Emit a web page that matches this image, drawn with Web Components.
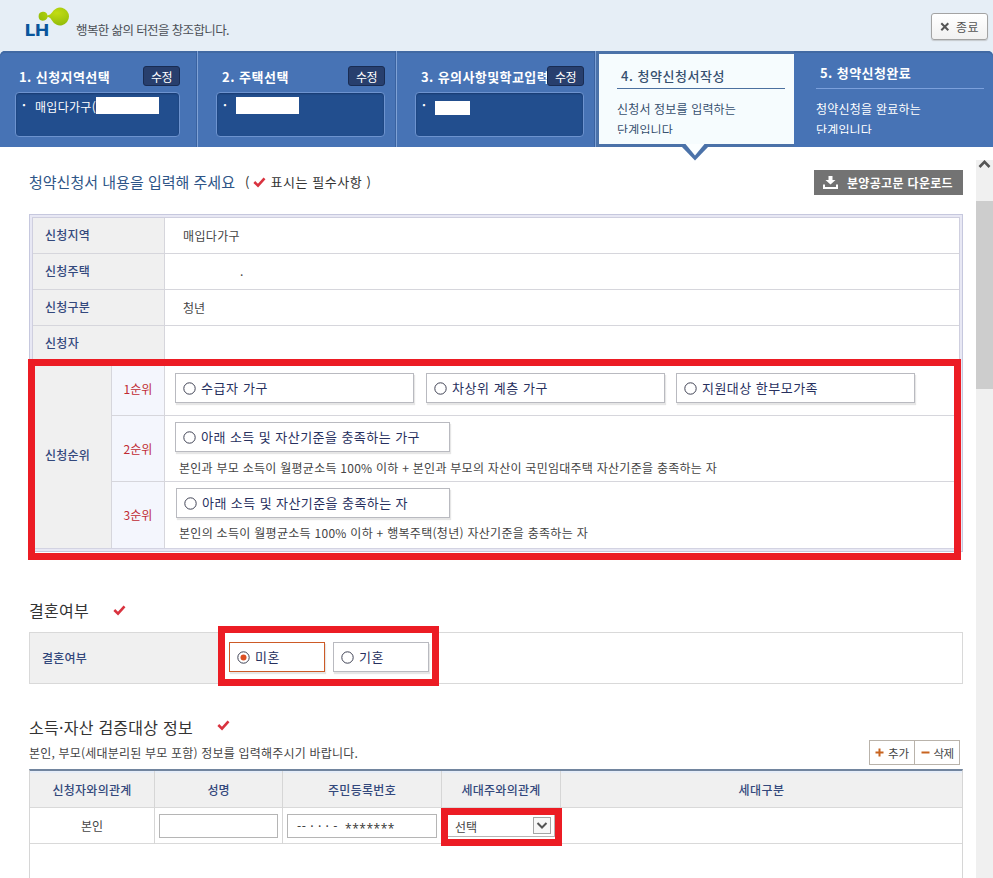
<!DOCTYPE html>
<html lang="ko">
<head>
<meta charset="utf-8">
<title>청약신청서작성</title>
<style>
  body {
    margin: 0;
    width: 993px;
    height: 878px;
    overflow: hidden;
    background: #fff;
    color: #444;
    font: 12px/20px "Noto Sans CJK KR", sans-serif;
  }
</style>
</head>
<body>
<lh-app></lh-app>

<script>
// Helper: define un elemento a partir de su plantilla
function define(name, html, setup) {
  const template = document.createElement('template');
  template.innerHTML = html;

  customElements.define(name, class extends HTMLElement {
    connectedCallback() {
      if (this.shadowRoot) return;
      this.attachShadow({ mode: 'open' });
      this.shadowRoot.appendChild(template.content.cloneNode(true));
      if (setup) setup(this, this.shadowRoot);
    }
  });
}

// Cabecera: logo, lema y botón de salida
define('lh-header', `
  <style>
    :host { display: flex; justify-content: space-between; height: 51px; background: #e6eef6; }
    .brand { display: flex; padding-left: 25px; }
    svg { display: block; }
    .slogan { margin: 20px 0 0 6px; font-size: 12.5px; color: #4b4f55; }
    button {
      display: flex; align-items: center; box-sizing: border-box; width: 57px; height: 27px;
      margin: 13px 5px 0 0; padding: 0 0 0 8px; gap: 6px;
      border: 1px solid #a3a3a3; border-radius: 3px;
      background: linear-gradient(#fff, #f1f1f1); box-shadow: 0 1px 1px #c5c9ce;
      font: 12px/20px "Noto Sans CJK KR", sans-serif; color: #555;
    }
  </style>
  <div class="brand">
    <svg width="45" height="42" viewBox="0 0 45 42">
      <defs><radialGradient id="g" cx=".6" cy=".3" r=".8"><stop offset="0" stop-color="#c2dc12"/><stop offset="1" stop-color="#8cb808"/></radialGradient></defs>
      <path fill="url(#g)" d="M44 16.500A9 9 0 0 1 27 20.500Q25.500 17.500 22.800 16.700Q21.500 20.800 17.500 20.800A4.500 4.500 0 1 1 22.500 15.400Q25.500 15 27 12.500A9 9 0 0 1 44 16.500Z"/>
      <text x="0" y="36" font-family="Inter, sans-serif" font-weight="800" font-size="16.500" textLength="24" lengthAdjust="spacingAndGlyphs" fill="#0a559c">LH</text>
    </svg>
    <fit-text class="slogan" width="153">행복한 삶의 터전을 창조합니다.</fit-text>
  </div>
  <button>
    <svg width="10" height="10" viewBox="0 0 10 10"><path d="M1.300 1.300l7 7M8.300 1.300l-7 7" stroke="#555" stroke-width="2"/></svg>
    <fit-text width="23">종료</fit-text>
  </button>
`);

// Paso ya completado, con botón de edición
define('step-done', `
  <style>
    :host {
      display: block; box-sizing: border-box; width: var(--w, 199px); height: 96px;
      padding: 15px 11px 0 var(--pad, 18px); border-right: 1px solid #7fa2d6;
      box-shadow: inset -1px 0 #3a62a0; color: #fff;
    }
    .top { display: flex; justify-content: space-between; height: 26px; padding-left: var(--tpad, 6px); }
    .title { font-size: 13px; font-weight: 700; }
    ::slotted([slot=title]) { margin-top: 1px; }
    button {
      flex: none; width: 37px; height: 20px; margin: 0 0 0 -4px; padding: 0;
      border: 1px solid #192c52; border-radius: 3px; background: #283f6d;
      font: 12px/17px "Noto Sans CJK KR", sans-serif; color: #fff;
    }
    .box {
      display: flex; box-sizing: border-box; height: 45px;
      border: 1px solid #6d93cf; border-radius: 4px; background: #224e8e;
      box-shadow: inset 0 1px 2px #173a70;
    }
    .dot { width: 19px; padding-left: 6px; box-sizing: border-box; line-height: 24px; font-weight: 700; }
    .mask { width: var(--mw, 63px); height: var(--mh, 17px); margin-top: var(--mt, 4px); background: #fff; }
    ::slotted([slot=value]) { line-height: 27px; }
  </style>
  <div class="top"><slot name="title" class="title"></slot><button><fit-text width="21">수정</fit-text></button></div>
  <div class="box"><span class="dot">·</span><slot name="value"></slot><span class="mask"></span></div>
`);

// Paso actual o pendiente
define('step-info', `
  <style>
    :host { display: block; position: relative; box-sizing: border-box; height: 96px; width: 199px; padding: 12px 9px 0 22px; color: #fff; --rule: #7ba0dc; }
    :host([current]) {
      width: 198px; padding: 12px 9px 0 18px; background: #f6fcfe; color: #36506f; --rule: #4b709f;
      border: solid #4b72a9; border-width: 3px 0 3px 3px;
    }
    .title { display: block; height: 25px; padding-left: 4px; font-size: 13px; border-bottom: 1px solid var(--rule); }
    :host([current]) .title { height: 22px; }
    .text { height: 45px; padding-top: 9px; box-sizing: border-box; line-height: 21px; overflow: hidden; }
    .tip { display: none; position: absolute; left: 81px; top: 90px; }
    :host([current]) .tip { display: block; }
  </style>
  <div class="title"><slot name="title"></slot></div>
  <div class="text"><slot></slot></div>
  <svg class="tip" width="30" height="17" viewBox="0 0 30 17"><path d="M1 2L15 16.500 29 2Z" fill="#4b72a9"/><path d="M5.500 0L15 11.500 24.500 0Z" fill="#fbfeff"/></svg>
`);

define('step-bar', `
  <style>
    :host { display: flex; height: 96px; background: #4773b5; border-radius: 5px 5px 0 0; box-shadow: inset 0 2px #4169a3; }
    .first { --w: 198px; --pad: 15px; --tpad: 4px; padding-right: 17px; }
    .third { --mw: 35px; --mh: 14px; --mt: 8px; }
  </style>
  <step-done class="first"><fit-text slot="title" width="91">1. 신청지역선택</fit-text><fit-text slot="value" width="61">매입다가구(</fit-text></step-done>
  <step-done class="second"><fit-text slot="title" width="67">2. 주택선택</fit-text></step-done>
  <step-done class="third"><fit-text slot="title" width="128">3. 유의사항및학교입력</fit-text></step-done>
  <step-info current>
    <fit-text slot="title" width="104" weight="500">4. 청약신청서작성</fit-text>
    <fit-text width="119">신청서 정보를 입력하는</fit-text><br><fit-text width="56">단계입니다</fit-text>
  </step-info>
  <step-info>
    <fit-text slot="title" width="91" weight="700">5. 청약신청완료</fit-text>
    <fit-text width="105">청약신청을 완료하는</fit-text><br><fit-text width="56">단계입니다</fit-text>
  </step-info>
`);

// Marca roja de campo obligatorio
define('req-mark', `
  <style>:host { display: inline-block; width: 13px; height: 11px; } svg { display: block; }</style>
  <svg width="13" height="11" viewBox="0 0 13 11"><path d="M1.300 5L5 8.600 11.500 1.300" fill="none" stroke="#d9333f" stroke-width="2.600"/></svg>
`);

// Opción con apariencia de caja
define('radio-box', `
  <style>
    :host {
      display: flex; align-items: center; box-sizing: border-box; height: 30px; flex: none;
      padding-left: 7px; gap: 5px; border: 1px solid #b9bac0; background: #fff;
      box-shadow: 1px 2px 1px #e6e6e6; color: #27305e; font-size: 13px;
    }
    :host([checked]) { border-color: #cd5a26; }
    circle.in { display: none; }
    :host([checked]) circle.in { display: block; }
    slot { display: block; margin-top: -1px; }
  </style>
  <svg width="13" height="13" viewBox="0 0 13 13"><circle cx="6.500" cy="6.500" r="5.700" fill="#fff" stroke="#3f4254"/><circle class="in" cx="6.500" cy="6.500" r="3" fill="#dc4f22"/></svg>
  <slot></slot>
`, (el) => { el.style.width = el.getAttribute('width') + 'px'; });

// Tabla de datos de la solicitud
define('apply-table', `
  <style>
    :host { display: block; box-sizing: border-box; width: 934px; height: 338px; padding: 2px; border: 1px solid #c6c8de; background: #e8e8f4; }
    .inner { border: 1px solid #cfcfdf; border-bottom: 0; background: #fff; }
    .row { display: flex; height: 35px; border-bottom: 1px solid #d6d6dc; line-height: 34px; }
    .label { box-sizing: border-box; width: 132px; padding-left: 12px; border-right: 1px solid #d6d6dc; background: #f0f0f0; color: #33487c; font-weight: 500; }
    .value { padding-left: 18px; line-height: 35px; }
    .rank { display: grid; grid-template-columns: 79px 1fr; height: 186px; border-bottom: 1px solid #d3d3e2; }
    .side { display: flex; align-items: center; padding-left: 12px; background: #f0f0f0; border-right: 1px solid #d6d6dc; color: #33487c; font-weight: 500; }
    .line { display: flex; box-sizing: border-box; border-bottom: 1px solid #d6d6dc; }
    .line:last-child { border-bottom: 0; }
    .no { display: flex; align-items: center; justify-content: center; box-sizing: border-box; width: 53px; background: #f4f6fd; border-right: 1px solid #d6d6dc; color: #bf2a33; font-weight: 400; }
    .opts { padding: 6px 0 0 10px; }
    .three { display: flex; gap: 12px; }
    .three radio-box:last-child { margin-left: -1px; }
    .desc { padding: 6px 0 0 4px; }
    .line:last-child .desc { padding-top: 5px; }
  </style>
  <div class="inner">
    <div class="row"><div class="label"><fit-text width="45">신청지역</fit-text></div><div class="value"><fit-text width="57">매입다가구</fit-text></div></div>
    <div class="row"><div class="label"><fit-text width="45">신청주택</fit-text></div><div class="value" style="padding-left:75px;line-height:33px">.</div></div>
    <div class="row"><div class="label"><fit-text width="45">신청구분</fit-text></div><div class="value"><fit-text width="22">청년</fit-text></div></div>
    <div class="row"><div class="label"><fit-text width="34">신청자</fit-text></div><div class="value"></div></div>
    <div class="rank">
      <div class="side"><fit-text width="45">신청순위</fit-text></div>
      <div>
        <div class="line" style="height:54px">
          <div class="no"><fit-text width="29">1순위</fit-text></div>
          <div class="opts three" style="padding-top:11px">
            <radio-box width="239"><fit-text width="67">수급자 가구</fit-text></radio-box>
            <radio-box width="239"><fit-text width="96">차상위 계층 가구</fit-text></radio-box>
            <radio-box width="239"><fit-text width="116">지원대상 한부모가족</fit-text></radio-box>
          </div>
        </div>
        <div class="line" style="height:66px">
          <div class="no"><fit-text width="29">2순위</fit-text></div>
          <div class="opts">
            <radio-box width="275"><fit-text width="219">아래 소득 및 자산기준을 충족하는 가구</fit-text></radio-box>
            <div class="desc"><fit-text width="538">본인과 부모 소득이 월평균소득 100% 이하 + 본인과 부모의 자산이 국민임대주택 자산기준을 충족하는 자</fit-text></div>
          </div>
        </div>
        <div class="line" style="height:66px">
          <div class="no"><fit-text width="29">3순위</fit-text></div>
          <div class="opts">
            <radio-box width="274" style="margin-left:1px"><fit-text width="206">아래 소득 및 자산기준을 충족하는 자</fit-text></radio-box>
            <div class="desc"><fit-text width="409">본인의 소득이 월평균소득 100% 이하 + 행복주택(청년) 자산기준을 충족하는 자</fit-text></div>
          </div>
        </div>
      </div>
    </div>
  </div>
`);

// Estado civil
define('marriage-field', `
  <style>
    :host { display: flex; box-sizing: border-box; width: 934px; height: 52px; border: 1px solid #d9d9d9; }
    .label { box-sizing: border-box; width: 190px; padding-left: 12px; line-height: 50px; background: #f0f0f0; color: #33487c; font-weight: 500; }
    .opts { display: flex; gap: 8px; padding: 9px 0 0 9px; }
  </style>
  <div class="label"><fit-text width="45">결혼여부</fit-text></div>
  <div class="opts">
    <radio-box checked width="96"><fit-text width="25">미혼</fit-text></radio-box>
    <radio-box width="96"><fit-text width="25">기혼</fit-text></radio-box>
  </div>
`);

// Tabla de miembros del hogar
define('member-table', `
  <style>
    :host { display: block; box-sizing: border-box; width: 934px; height: 120px; border: 1px solid #d6d6d6; border-top: 2px solid #72859e; border-bottom: 0; }
    .row { display: grid; grid-template-columns: 125px 128px 159px 119px 1fr; box-sizing: border-box; border-bottom: 1px solid #d9d9d9; text-align: center; }
    .head { height: 37px; line-height: 37px; background: #f0f0f0; color: #33487c; font-weight: 500; box-shadow: inset 0 2px #e6edf8; }
    .body { height: 36px; line-height: 36px; }
    .row > div { box-sizing: border-box; border-right: 1px solid #d6d6d6; }
    .row > div:last-child { border-right: 0; }
    .body > .in { padding: 6px 4px 0; }
    .field { box-sizing: border-box; height: 24px; border: 1px solid #b5b5b5; line-height: 21px; background: #fff; text-align: left; }
    .field span { display: inline-block; color: #333; }
    .select { display: flex; justify-content: space-between; box-sizing: border-box; height: 23px; margin: 6px 5px 0 4px; padding: 2px 2px 0 8px; border: 1px solid #b5b5b5; line-height: 20px; }
    svg { display: block; }
  </style>
  <div class="row head">
    <div><fit-text width="79">신청자와의관계</fit-text></div>
    <div><fit-text width="22">성명</fit-text></div>
    <div><fit-text width="68">주민등록번호</fit-text></div>
    <div><fit-text width="79">세대주와의관계</fit-text></div>
    <div><fit-text width="46">세대구분</fit-text></div>
  </div>
  <div class="row body">
    <div><fit-text width="22">본인</fit-text></div>
    <div class="in"><div class="field"></div></div>
    <div class="in"><div class="field"><span style="margin-left:9px"><fit-text width="41">-- · · · -</fit-text></span><span style="margin-left:7px;vertical-align:-2px;font-family:'Open Sans',sans-serif"><fit-text width="50">*******</fit-text></span></div></div>
    <div><div class="select"><fit-text width="22">선택</fit-text>
      <svg width="19" height="17" viewBox="0 0 19 17"><rect x=".5" y=".5" width="17" height="16" fill="#f8f8f8" stroke="#a5a5a5"/><path d="M4.500 6L9 10.500 13.500 6" fill="none" stroke="#555" stroke-width="2"/></svg></div></div>
    <div></div>
  </div>
`);

// Barra de desplazamiento
define('scroll-rail', `
  <style>
    :host { display: block; width: 17px; height: 718px; margin-top: 13px; background: #f0f0f0; }
    svg { display: block; }
    .thumb { height: 188px; margin-top: 32px; background: #cdcdcd; }
  </style>
  <svg width="17" height="9" viewBox="0 0 17 9"><path d="M3.500 7L8.500 1.800 13.500 7" fill="none" stroke="#555" stroke-width="2.600"/></svg>
  <div class="thumb"></div>
`);

// Marco rojo que resalta una zona del formulario
define('focus-frame', `
  <style>:host { position: absolute; box-sizing: border-box; border: 7px solid #ec1c24; pointer-events: none; }</style>
`, (el) => {
  const [left, top, width, height] = el.getAttribute('rect').split(' ');
  Object.assign(el.style, { left: left + 'px', top: top + 'px', width: width + 'px', height: height + 'px' });
});

define('lh-app', `
  <style>
    :host { display: block; position: relative; width: 993px; height: 878px; overflow: hidden; }
    .top { background: #e6eef6; }
    .content { display: flex; justify-content: space-between; }
    main { width: 934px; padding-left: 29px; }
    .intro { display: flex; align-items: center; height: 67px; box-sizing: border-box; }
    .intro h1 { margin: 2px 10px 0 0; font-size: 15px; line-height: 22px; font-weight: 400; color: #2e5587; }
    .note { display: flex; align-items: center; gap: 4px; margin-top: 3px; font-size: 13px; color: #333; }
    .download {
      display: flex; align-items: center; box-sizing: border-box; width: 149px; height: 25px; margin: 4px 0 0 auto;
      padding: 0 0 0 9px; gap: 9px; border: 0; background: #737373;
      font: 700 12px/20px "Noto Sans CJK KR", sans-serif; color: #fff;
    }
    .head { display: flex; font-size: 16px; line-height: 24px; color: #333; }
    .head req-mark { margin: 7px 0 0 24px; }
    .head.marriage { margin-top: 46px; height: 34px; }
    .head.member { margin-top: 31px; height: 25px; }
    .head.member req-mark { margin-top: 5px; }
    .sub { display: flex; justify-content: space-between; height: 29px; padding: 0 3px 0 0; }
    .sub > fit-text { margin-top: 3px; }
    .btns { display: flex; box-sizing: border-box; width: 91px; height: 25px; border: 1px solid #b9b3ab; }
    .btns span { flex: 1; display: flex; align-items: center; justify-content: center; gap: 4px; font-size: 11.500px; }
    .btns span + span { border-left: 1px solid #b9b3ab; }
  </style>
  <div class="top">
    <lh-header></lh-header>
    <step-bar></step-bar>
  </div>
  <div class="content">
    <main>
      <div class="intro">
        <h1><fit-text width="206">청약신청서 내용을 입력해 주세요</fit-text></h1>
        <div class="note"><span>(</span><req-mark></req-mark><fit-text width="101">표시는 필수사항 )</fit-text></div>
        <button class="download">
          <svg width="15" height="13" viewBox="0 0 15 13"><path d="M5.500 0h4v4h3L7.500 8.500 2.500 4h3zM0 8.500h2V11h11V8.500h2V13H0z" fill="#fff"/></svg>
          <fit-text width="106">분양공고문 다운로드</fit-text>
        </button>
      </div>
      <apply-table></apply-table>
      <div class="head marriage"><fit-text width="60">결혼여부</fit-text><req-mark></req-mark></div>
      <marriage-field></marriage-field>
      <div class="head member"><fit-text width="164">소득·자산 검증대상 정보</fit-text><req-mark></req-mark></div>
      <div class="sub">
        <fit-text width="329">본인, 부모(세대분리된 부모 포함) 정보를 입력해주시기 바랍니다.</fit-text>
        <div class="btns">
          <span><svg width="9" height="9" viewBox="0 0 9 9"><path d="M4.500 .5v8M.5 4.500h8" stroke="#c86420" stroke-width="2"/></svg><fit-text width="21">추가</fit-text></span>
          <span><svg width="9" height="9" viewBox="0 0 9 9"><path d="M.5 4.500h8" stroke="#c86420" stroke-width="2"/></svg><fit-text width="20">삭제</fit-text></span>
        </div>
      </div>
      <member-table></member-table>
    </main>
    <scroll-rail></scroll-rail>
  </div>
  <focus-frame rect="28 359 933 201"></focus-frame>
  <focus-frame rect="218 626 221 60"></focus-frame>
  <focus-frame rect="441 808 121 38"></focus-frame>
`);

// Texto ajustado a un ancho dado mediante el espaciado
define('fit-text', `
  <style>:host { display: inline-block; flex: none; white-space: nowrap; }</style>
  <slot></slot>
`, (el) => {
  if (el.hasAttribute('weight')) el.style.fontWeight = el.getAttribute('weight');
  const range = document.createRange();
  range.selectNodeContents(el);
  const natural = range.getBoundingClientRect().width;
  const width = Number(el.getAttribute('width'));
  const count = el.textContent.length;
  if (natural && count > 1) el.style.letterSpacing = ((width - natural) / count).toFixed(3) + 'px';
});
</script>
</body>
</html>
